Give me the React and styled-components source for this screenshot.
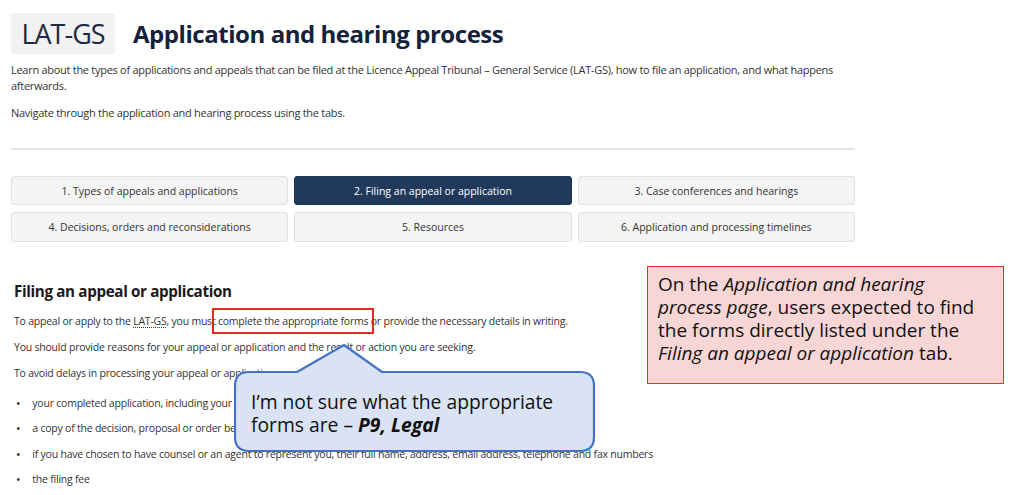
import React from "react";
import styled, { createGlobalStyle } from "styled-components";

const Global = createGlobalStyle`
  html, body { margin: 0; padding: 0; background: #fff; }
  body { font-family: "Open Sans", "Liberation Sans", sans-serif; }
`;

const Canvas = styled.div`
  position: relative;
  width: 1024px;
  height: 495px;
  overflow: hidden;
`;

const Page = styled.div`
  width: 844px;
  padding: 13px 0 0 11px;
  color: #333;
`;

const Header = styled.div`
  display: flex;
  align-items: center;
  gap: 18px;
`;

const Badge = styled.div`
  background: #f2f2f2;
  border-radius: 3px;
  height: 41px;
  width: 104px;
  display: flex;
  align-items: center;
  justify-content: center;
  font-size: 27px;
  letter-spacing: -1px;
  color: #1c2b45;
  font-weight: 400;
`;

const Title = styled.h1`
  margin: 0;
  font-size: 24px;
  letter-spacing: -0.45px;
  font-weight: 700;
  color: #14213a;
`;

const Intro = styled.p`
  margin: ${p => p.$top || 0}px 0 0;
  font-size: 11px;
  letter-spacing: -0.28px;
  line-height: 16px;
  color: #333;
`;

const Rule = styled.hr`
  border: 0;
  border-top: 2px solid #e2e2e2;
  margin: 27px 0 26px;
`;

const Tabs = styled.div`
  display: grid;
  grid-template-columns: repeat(3, 1fr);
  column-gap: 6px;
  row-gap: 7px;
`;

const Tab = styled.div`
  height: ${p => p.$h}px;
  box-sizing: border-box;
  display: flex;
  align-items: center;
  justify-content: center;
  font-size: 10.5px;
  border-radius: 3px;
  border: 1px solid ${p => (p.$active ? "#1d3557" : "#e1e1e1")};
  background: ${p => (p.$active ? "#213a5c" : "#f4f4f4")};
  color: ${p => (p.$active ? "#fff" : "#333")};
`;

const Section = styled.div`
  padding: 38px 0 0 3px;
`;

const H2 = styled.h2`
  margin: 0 0 6px;
  font-size: 15.2px;
  letter-spacing: -0.35px;
  font-weight: 700;
  color: #1a1a1a;
  line-height: 22px;
`;

const Para = styled.p`
  margin: 0;
  font-size: 10.5px;
  letter-spacing: -0.22px;
  line-height: 26px;
  color: #333;
`;

const Abbr = styled.span`
  text-decoration: underline dotted;
  text-underline-offset: 2px;
`;

const Marked = styled.span`
  outline: 2.5px solid #e8261e;
  outline-offset: 4.5px;
`;

const List = styled.ul`
  margin: 5px 0 0;
  padding: 0 0 0 2px;
  list-style: none;
`;

const Item = styled.li`
  font-size: 10.5px;
  letter-spacing: -0.22px;
  line-height: 25.4px;
  color: #333;
  display: flex;
  gap: 12px;
  &::before {
    content: "•";
    font-size: 12px;
  }
`;

const Note = styled.div`
  position: absolute;
  left: 647px;
  top: 266px;
  width: 357px;
  height: 118px;
  box-sizing: border-box;
  background: #f8d6d6;
  border: 1px solid #e3302c;
  padding: 6px 10px;
  font-size: 19px;
  line-height: 23px;
  color: #111;
  white-space: nowrap;
`;

const Bubble = styled.div`
  position: absolute;
  left: 234px;
  top: 344px;
  width: 362px;
  height: 110px;
`;

const BubbleShape = styled.svg`
  position: absolute;
  inset: 0;
`;

const BubbleText = styled.div`
  position: relative;
  padding: 46px 0 0 17px;
  font-size: 19.3px;
  line-height: 23px;
  color: #111;
`;

export default function App() {
  return (
    <Canvas>
      <Global />
      <Page>
        <Header>
          <Badge>LAT-GS</Badge>
          <Title>Application and hearing process</Title>
        </Header>
        <Intro $top={8}>
          Learn about the types of applications and appeals that can be filed at the Licence Appeal Tribunal – General Service (LAT-GS), how to file an application, and what happens afterwards.
        </Intro>
        <Intro $top={11}>Navigate through the application and hearing process using the tabs.</Intro>
        <Rule />
        <Tabs>
          <Tab $h={29}>1. Types of appeals and applications</Tab>
          <Tab $h={29} $active>2. Filing an appeal or application</Tab>
          <Tab $h={29}>3. Case conferences and hearings</Tab>
          <Tab $h={30}>4. Decisions, orders and reconsiderations</Tab>
          <Tab $h={30}>5. Resources</Tab>
          <Tab $h={30}>6. Application and processing timelines</Tab>
        </Tabs>
        <Section>
          <H2>Filing an appeal or application</H2>
          <Para>
            To appeal or apply to the <Abbr>LAT-GS</Abbr>, you must <Marked>complete the appropriate forms</Marked> or provide the necessary details in writing.
          </Para>
          <Para>You should provide reasons for your appeal or application and the result or action you are seeking.</Para>
          <Para>To avoid delays in processing your appeal or application, you must include:</Para>
          <List>
            <Item>your completed application, including your reasons for appealing or applying</Item>
            <Item>a copy of the decision, proposal or order being appealed, if applicable</Item>
            <Item>if you have chosen to have counsel or an agent to represent you, their full name, address, email address, telephone and fax numbers</Item>
            <Item>the filing fee</Item>
          </List>
        </Section>
      </Page>

      <Note>
        On the <i>Application and hearing</i>
        <br />
        <i>process page</i>, users expected to find
        <br />
        the forms directly listed under the
        <br />
        <i>Filing an appeal or application</i> tab.
      </Note>

      <Bubble>
        <BubbleShape width="362" height="110" viewBox="0 0 362 110">
          <path
            d="M15 28 L63 28 L110 1 L148 28 L346 28 Q360 28 360 42 L360 93 Q360 107 346 107 L15 107 Q1 107 1 93 L1 42 Q1 28 15 28 Z"
            fill="#dae3f3"
            stroke="#4472c4"
            strokeWidth="2.2"
            strokeLinejoin="round"
          />
        </BubbleShape>
        <BubbleText>
          I’m not sure what the appropriate
          <br />
          forms are – <b><i>P9, Legal</i></b>
        </BubbleText>
      </Bubble>
    </Canvas>
  );
}
